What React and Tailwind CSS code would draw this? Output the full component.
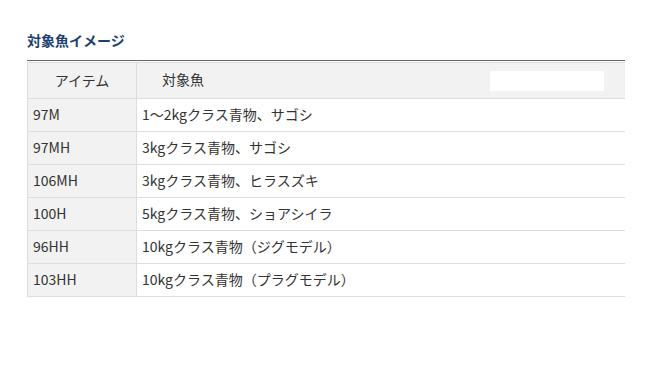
const rows = [
  ['97M', '1～2kgクラス青物、サゴシ'],
  ['97MH', '3kgクラス青物、サゴシ'],
  ['106MH', '3kgクラス青物、ヒラスズキ'],
  ['100H', '5kgクラス青物、ショアシイラ'],
  ['96HH', '10kgクラス青物（ジグモデル）'],
  ['103HH', '10kgクラス青物（プラグモデル）'],
]

export default function App() {
  return (
    <div className="w-[651px] h-[367px] bg-white text-[#333] text-[14px] font-['Noto_Sans_CJK_JP','Noto_Sans',sans-serif]">
      <div className="pl-[27px] pr-[26px] pt-[30px]">
        <h2 className="text-[14px] font-bold text-[#1e3f73] leading-[20px]">対象魚イメージ</h2>
        <div className="mt-[10px] border-t border-[#666] pt-px">
          <div className="border-t border-l border-[#ddd]">
            <div className="grid grid-cols-[109px_1fr] h-[36px] bg-[#f2f2f2] border-b border-[#ddd]">
              <div className="flex items-center justify-center border-r border-[#ddd] leading-none pb-[1px]">アイテム</div>
              <div className="flex items-center justify-between pl-[25px] pr-[21px]">
                <span className="leading-none -mt-[4px]">対象魚</span>
                <div className="w-[114px] h-[20px] bg-white" />
              </div>
            </div>
            {rows.map(([item, fish]) => (
              <div key={item} className="grid grid-cols-[109px_1fr] h-[33px] border-b border-[#ddd]">
                <div className="flex items-center pl-[5px] pb-[2px] bg-[#f2f2f2] border-r border-[#ddd] leading-none">{item}</div>
                <div className="flex items-center pl-[5px] pb-[2px] leading-none">{fish}</div>
              </div>
            ))}
          </div>
        </div>
      </div>
    </div>
  )
}
